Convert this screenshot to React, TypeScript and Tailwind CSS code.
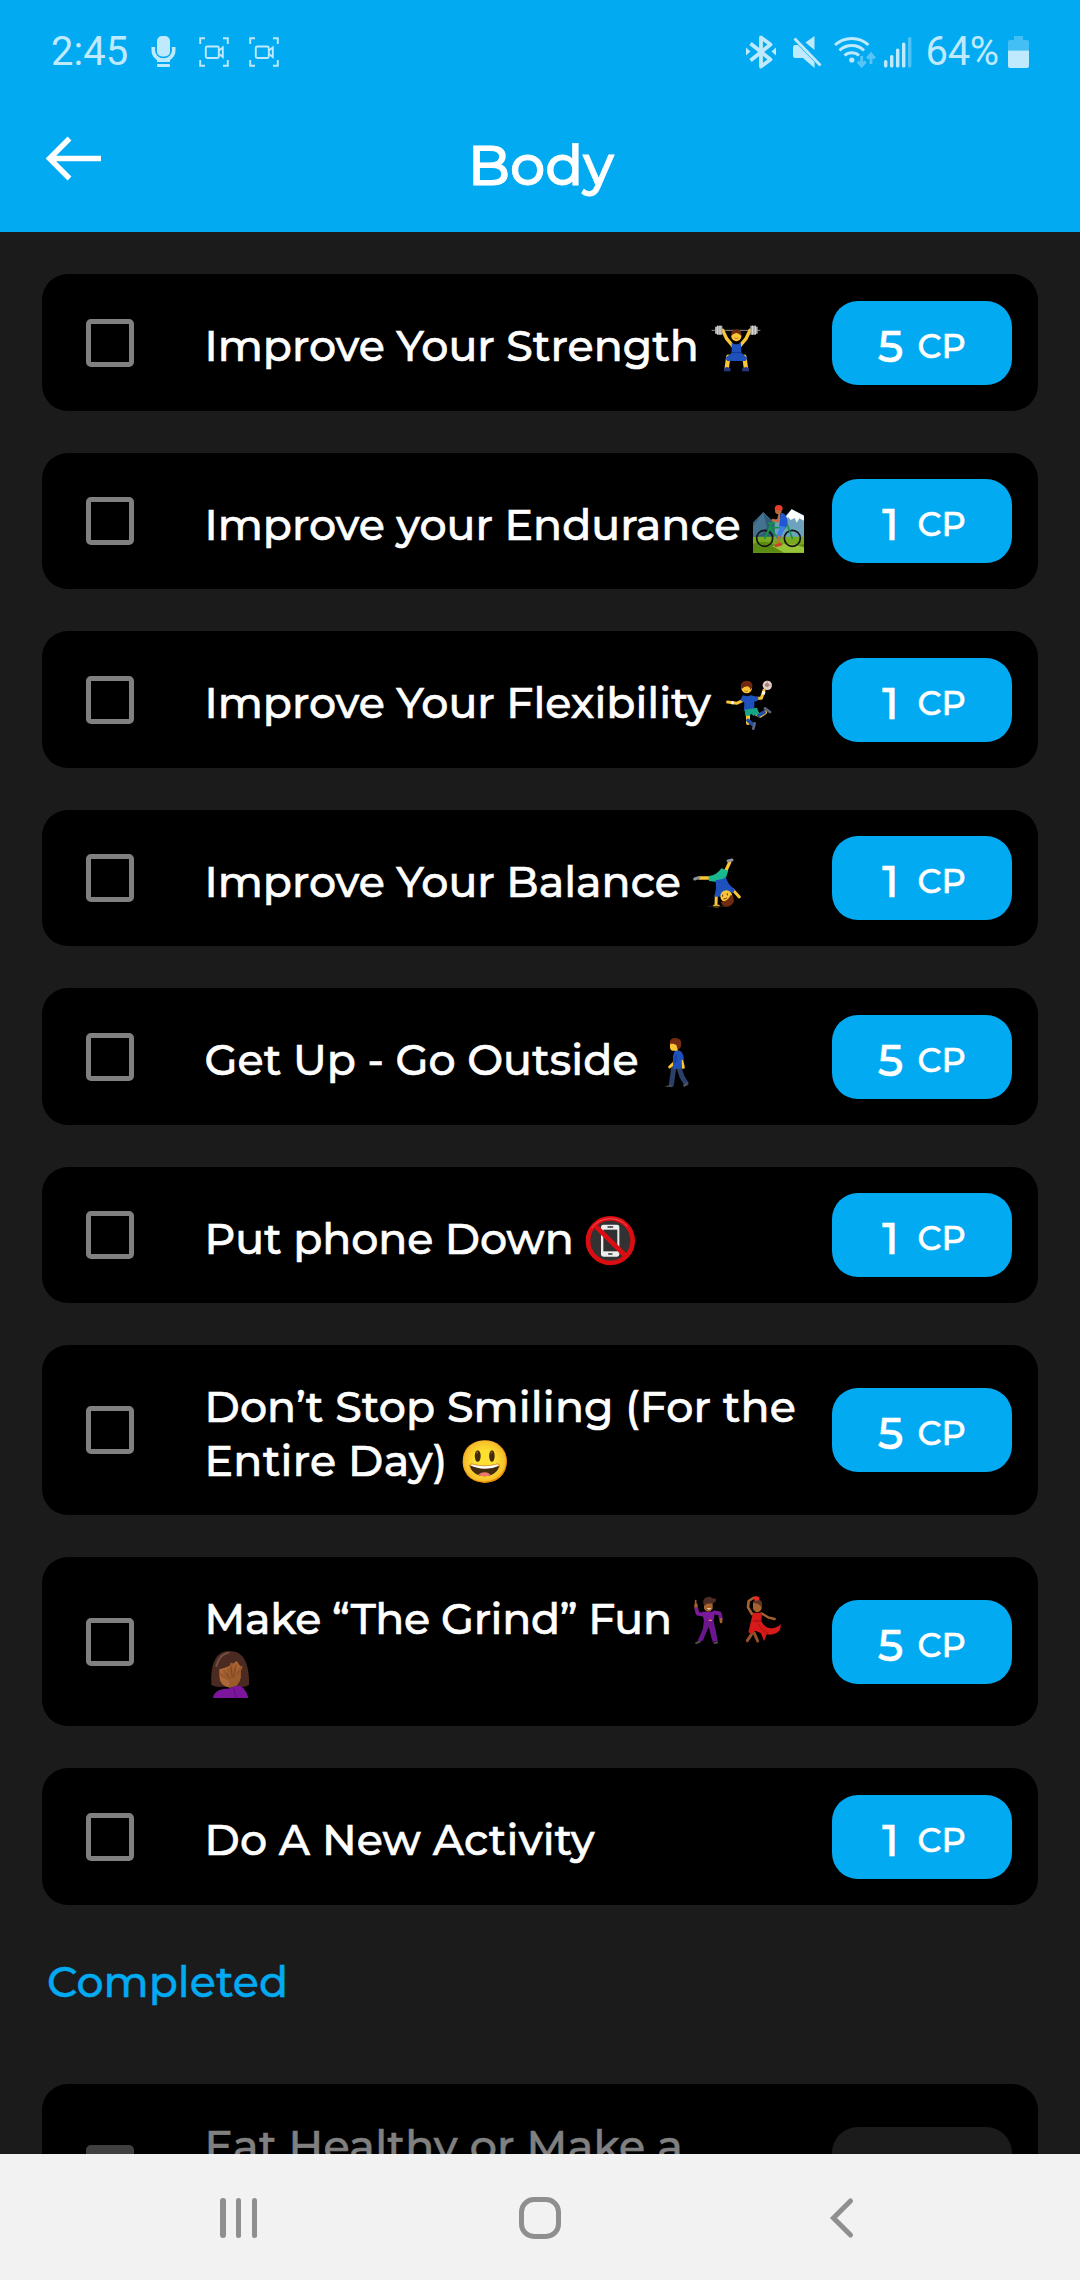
import React from "react";

type Picture = { art: React.ReactNode; gap: string };
type Line = { text?: string; tracking?: string; pictures?: Picture[] };
type Task = { lines: Line[]; points?: number };

function Art({ label, children }: { label: string; children: React.ReactNode }) {
  return (
    <svg
      className="mt-[3.5px] h-[52px] w-[52px] overflow-visible"
      viewBox="0 0 156 156"
      role="img"
      aria-label={label}
      fill="none"
      strokeLinecap="round"
      strokeLinejoin="round"
    >
      {children}
    </svg>
  );
}

const SKIN = "#fcc537";
const BLUE = "#1f51bd";

const lifter = (
  <Art label="Man lifting weights">
    <path d="M6 19H150" stroke="#8a8a8a" strokeWidth="3" />
    <path d="M38 19L50 44 70 68M120 19L108 44 88 68" stroke={SKIN} strokeWidth="10" />
    <path d="M55 98L50 134M103 98L108 134" stroke={SKIN} strokeWidth="13" />
    <path d="M15 8h7V5h15v27H22v-3h-7zM143 8h-7V5h-15v27h15v-3h7z" fill="#a9a9a9" />
    <path d="M22 5v27M30 5v27M136 5v27M128 5v27" stroke="#dedede" strokeWidth="3" strokeLinecap="butt" />
    <circle cx="79" cy="37" r="15" fill={SKIN} />
    <path d="M64 35q-2-19 15-19t15 19q-8-8-15-8t-15 8z" fill="#6b2c10" />
    <path d="M74 42q5 4 10 0" stroke="#a0571a" strokeWidth="2" />
    <path d="M65 56q14 10 28 0l1 30 18 16-5 9H52l-6-9 19-16z" fill={BLUE} />
    <path d="M66 86h27" stroke="#123a90" strokeWidth="3" />
    <path d="M42 142v-9l8-4 11 3 1 10zM117 142v-9l-8-4-12 3-1 10z" fill="#26387f" />
  </Art>
);

const cyclist = (
  <Art label="Mountain biker">
    <path d="M3 62L34 31l26 26 40-15 19-20 37 18v112H3z" fill="#6da3bd" />
    <path d="M3 62L34 31l34 32v44H3z" fill="#2f5c78" />
    <path d="M34 31l10 45-14 20L3 104V72z" fill="#43738f" />
    <path d="M102 44l17-22 37 20v14l-14-7-8 13-6-14-12 6-8-10-6 12z" fill="#ffffff" />
    <path d="M3 104h153v48H3z" fill="#79a91f" />
    <path d="M3 126q30-14 60 0t93 0v26H3z" fill="#5a8c12" />
    <path d="M60 132q50-14 96 4v16H96z" fill="#98c43a" />
    <circle cx="38" cy="109" r="24" stroke="#141414" strokeWidth="5" />
    <circle cx="121" cy="109" r="24" stroke="#141414" strokeWidth="5" />
    <path d="M38 109L58 66M38 109l17-32 22 31 28-42 16 43M55 77h46M50 64h18" stroke="#169447" strokeWidth="5" />
    <path d="M82 38L78 58 62 54" stroke="#c46c3a" strokeWidth="7" />
    <path d="M94 70L86 88 80 106" stroke="#3e7ce6" strokeWidth="14" />
    <path d="M82 104l-4 20" stroke="#c46c3a" strokeWidth="8" />
    <path d="M72 131l14-4" stroke="#ce412a" strokeWidth="9" />
    <path d="M86 32q19 1 21 28l-4 14-22-2 3-18z" fill="#2257d4" />
    <path d="M93 40L88 57" stroke="#2257d4" strokeWidth="10" />
    <circle cx="79" cy="26" r="10" fill="#b9683b" />
    <path d="M68 21q0-12 12-12t12 12l-3 5-21-3z" fill="#e83c2c" />
  </Art>
);

const handball = (
  <Art label="Man playing handball">
    <path d="M57 58L38 67 11 63M97 52L112 52 120 28" stroke={SKIN} strokeWidth="9" />
    <path d="M22 65h7M118 40l2-9" stroke="#ffffff" strokeWidth="9" strokeLinecap="butt" />
    <path d="M72 98v28M97 98l12 6 14-10" stroke={SKIN} strokeWidth="12" />
    <path d="M72 118l14 12M104 103l16-9" stroke="#244da5" strokeWidth="11" />
    <path d="M92 127l-4 16M123 82l15 11" stroke="#5c667b" strokeWidth="8" />
    <path d="M56 43q14 5 25 0l23 6-4 11-9 2 0 25-31 2 1-24-12-7z" fill={BLUE} />
    <path d="M62 86l37-6 7 18-18 6-7-6-3 6H64z" fill="#16a584" />
    <circle cx="68" cy="21" r="16" fill={SKIN} />
    <path d="M51 19q-2-20 17-20t17 20l-5 7q-4-10-10-10-10 0-17 8z" fill="#70290e" />
    <path d="M62 30q5 4 9 0" stroke="#98501b" strokeWidth="2" />
    <circle cx="130" cy="13" r="14" fill="#e5cfc7" />
    <path d="M124 9l7-3 5 6-5 6-7-3zM130 0v5M142 13h-5" fill="#a4857a" stroke="#a4857a" strokeWidth="2" />
  </Art>
);

const cartwheel = (
  <Art label="Man cartwheeling">
    <path d="M52 57H22M102 34L113 10" stroke={SKIN} strokeWidth="10" />
    <path d="M8 60l12-4M108 6l12-3" stroke="#8d929c" strokeWidth="9" />
    <path d="M50 51q24-1 38-23l21 7-8 23-20 12-30-4z" fill="#18b891" />
    <path d="M73 108L72 138M122 92l20 22" stroke={SKIN} strokeWidth="9" />
    <path d="M66 141h14" stroke={SKIN} strokeWidth="7" />
    <path d="M50 142h48" stroke="#26200f" strokeWidth="3" />
    <path d="M71 63q18 2 31-9 3 21 27 37l-6 12-19-8-22 18H67l5-24z" fill={BLUE} />
    <circle cx="103" cy="112" r="18" fill={SKIN} />
    <path d="M86 128q19 2 31-21 11 8 8 22-8 15-23 14-12-2-16-15z" fill="#6f2a0f" />
    <path d="M92 108v4M106 104v4M96 120q5 0 8-3" stroke="#5b3310" strokeWidth="3" />
  </Art>
);

const walker = (
  <Art label="Man walking">
    <path d="M72 86L64 140M86 86l10 30 12 20" stroke="#2c3f68" strokeWidth="15" />
    <path d="M46 145l16-5 5 6H45zM98 142l14-11 2 6-10 10z" fill="#50545f" />
    <path d="M94 62l6 26M78 60l-5 14-14 13" stroke={SKIN} strokeWidth="9" />
    <path d="M75 37q20-3 25 16l2 11-7 3 1 24-27 2V54z" fill={BLUE} />
    <path d="M78 54l-2 18" stroke="#173f9f" strokeWidth="6" />
    <path d="M60 20q2-17 17-16 14 2 14 14l-9 20H68q-10-2-8-18z" fill={SKIN} />
    <path d="M59 17q-1-17 17-17 19 1 18 18 0 13-11 17l-4-14-9-4z" fill="#742c10" />
  </Art>
);

const noPhone = (
  <Art label="No mobile phones">
    <circle cx="76" cy="74" r="66" fill="#323232" />
    <rect x="48" y="26" width="55" height="96" rx="7" fill="#eeeeee" />
    <rect x="55" y="41" width="42" height="65" fill="#303030" />
    <path d="M69 33h14M71 114h10" stroke="#303030" strokeWidth="4" />
    <circle cx="76" cy="74" r="67" stroke="#dc0d12" strokeWidth="14" />
    <path d="M30 29l92 91" stroke="#dc0d12" strokeWidth="14" />
    <path d="M21 35q20-27 55-27 30 0 50 22" stroke="#f0565a" strokeWidth="3" />
  </Art>
);

const discoDancer = (
  <Art label="Man dancing">
    <path d="M41 32V14" stroke="#a5622f" strokeWidth="5" />
    <path d="M42 27v8" stroke="#a5622f" strokeWidth="10" />
    <path d="M43 39l4 14 20 4M96 49l17 3 4 17" stroke="#7a1a9b" strokeWidth="11" />
    <path d="M117 70v8" stroke="#a5622f" strokeWidth="8" />
    <path d="M60 47h39l-5 28H66z" fill="#7a1a9b" />
    <path d="M66 73h28l7 30 6 32-15 3-12-46-18 43-15-1 15-33z" fill="#6c168d" />
    <path d="M82 73h6" stroke="#d8a437" strokeWidth="4" />
    <path d="M43 141l10-4M98 141l7-2" stroke="#4c4a49" strokeWidth="7" />
    <path d="M66 22h26v16q-5 9-13 9t-13-9z" fill="#a5622f" />
    <path d="M63 20q1-19 21-18 9 7 19 6-1 13-14 14-14-4-22 8z" fill="#4c2c24" />
    <path d="M77 38q4 3 8 0" stroke="#ffffff" strokeWidth="3" />
  </Art>
);

const dressDancer = (
  <Art label="Woman dancing">
    <path d="M48 54L36 34 38 15 52 6" stroke="#a5622f" strokeWidth="8" />
    <path d="M76 52l20 12 20 5" stroke="#a5622f" strokeWidth="7" />
    <path d="M50 98l-4 18-12 18M55 112l10 23" stroke="#8f5229" strokeWidth="9" />
    <path d="M51 19q14-10 26 3v16q-5 10-13 10t-13-10z" fill="#a5622f" />
    <path d="M50 20q9-16 22-8 10 7 5 22-8-13-27-14z" fill="#5d3524" />
    <path d="M50 4l9-4 11 4v8L58 15z" fill="#e82b25" />
    <path d="M51 50h27l-2 25q10 22 30 22 17-1 28-12 2 18-14 27-13 6-28 3l-8 21-9-24-16-8-12 9-10-4z" fill="#d71a19" />
    <path d="M52 75h24" stroke="#971012" strokeWidth="3" />
    <path d="M68 85q8 20 28 26" stroke="#ab1115" strokeWidth="3" />
  </Art>
);

const facepalm = (
  <Art label="Woman facepalming">
    <path d="M19 103Q14 3 74 3t58 100q-3 7-20 7H40q-17 0-21-7z" fill="#4b2b21" />
    <path d="M34 48Q44 12 70 8" stroke="#735044" strokeWidth="6" />
    <path d="M43 58q30-6 52-25l12 17v34q-8 29-33 29-29-5-31-33z" fill="#ac6838" />
    <path d="M58 64L76 91 70 57M76 91L80 43M80 86L94 44M86 86l22-34M86 96L48 74" stroke="#9b5a2c" strokeWidth="9" />
    <path d="M64 71l15 22M78 52l4 32M92 54l-7 29M103 64L90 89" stroke="#6e3b1b" strokeWidth="2" />
    <path d="M74 88q20-12 34-20-2 35-20 44H72z" fill="#9b5a2c" />
    <path d="M24 144q3-23 32-27 22 0 32-9l20 0q18 14 22 36z" fill="#7b169b" />
    <path d="M86 117l8 27" stroke="#59106f" strokeWidth="3" />
  </Art>
);

const smiley = <span className="text-[41.5px]">😃</span>;

const tasks: Task[] = [
  { lines: [{ text: "Improve Your Strength", pictures: [{ art: lifter, gap: "ml-[11px]" }] }], points: 5 },
  { lines: [{ text: "Improve your Endurance", pictures: [{ art: cyclist, gap: "ml-[11px]" }] }], points: 1 },
  { lines: [{ text: "Improve Your Flexibility", pictures: [{ art: handball, gap: "ml-[13px]" }] }], points: 1 },
  { lines: [{ text: "Improve Your Balance", pictures: [{ art: cartwheel, gap: "ml-[11px]" }] }], points: 1 },
  {
    lines: [{ text: "Get Up - Go Outside", tracking: "tracking-[0.06px]", pictures: [{ art: walker, gap: "ml-[11px]" }] }],
    points: 5,
  },
  { lines: [{ text: "Put phone Down", tracking: "tracking-[-0.06px]", pictures: [{ art: noPhone, gap: "ml-[11px]" }] }], points: 1 },
  {
    lines: [
      { text: "Don’t Stop Smiling (For the", tracking: "tracking-[0.12px]" },
      { text: "Entire Day)", tracking: "tracking-[0.25px]", pictures: [{ art: smiley, gap: "ml-[11px]" }] },
    ],
    points: 5,
  },
  {
    lines: [
      {
        text: "Make “The Grind” Fun",
        tracking: "tracking-[-0.33px]",
        pictures: [
          { art: discoDancer, gap: "ml-[10px]" },
          { art: dressDancer, gap: "ml-[2px]" },
        ],
      },
      { pictures: [{ art: facepalm, gap: "ml-0" }] },
    ],
    points: 5,
  },
  { lines: [{ text: "Do A New Activity", tracking: "tracking-[0.16px]" }], points: 1 },
];

function TaskCard({ task, done = false }: { task: Task; done?: boolean }) {
  return (
    <div
      className={`flex w-[996px] shrink-0 items-center rounded-[26px] bg-black pr-[26px] pl-[44px] ${
        task.lines.length > 1 ? "h-[169.5px]" : "h-[136.5px]"
      }`}
    >
      <div
        className={`size-[48px] shrink-0 rounded-[5px] border-[5px] ${
          done ? "border-[#404040] bg-[#404040]" : "border-[#808080]"
        }`}
      />
      <div className={`ml-[70.5px] flex-1 pt-[9px] ${done ? "text-[#808080]" : "text-white"}`}>
        {task.lines.map((line, i) => (
          <div key={i} className="flex h-[53.5px] text-[42.7px] leading-[53.5px] font-medium whitespace-nowrap">
            {line.text && (
              <span className={`[-webkit-text-stroke:0.6px_currentColor] ${line.tracking ?? ""}`}>{line.text}</span>
            )}
            {line.pictures?.map((p, j) => (
              <span key={j} className={`${p.gap} flex w-[52px] shrink-0 justify-center`}>
                {p.art}
              </span>
            ))}
          </div>
        ))}
      </div>
      <div
        className={`flex h-[84px] w-[180px] shrink-0 rounded-[26px] font-medium [-webkit-text-stroke:0.6px_currentColor] ${
          done ? "bg-[#1b1b1b]" : "bg-[#02aaf2] text-white"
        }`}
      >
        {task.points !== undefined && (
          <>
            <span className="ml-[40.5px] w-[36px] text-center text-[44.5px] leading-[91px]">{task.points}</span>
            <span className="ml-[9px] text-[33.5px] leading-[90px]">CP</span>
          </>
        )}
      </div>
    </div>
  );
}

function RecordIcon() {
  return (
    <svg className="h-[30px] w-[30px]" viewBox="0 0 30 30" fill="none" stroke="currentColor" strokeWidth="1.9">
      <path d="M1.200 7V1.200H6M24 1.200h4.800V7M28.800 23v5.800H24M6 28.800H1.200V23" />
      <rect x="6.800" y="9.500" width="13" height="11.500" rx="1.500" />
      <path d="M20 13.500l3.800-3v9.500l-3.800-3" />
    </svg>
  );
}

function StatusBar() {
  return (
    <div className="flex h-[104px] items-center pl-[51px] font-['Roboto'] text-[#bfe9fc]">
      <span className="w-[77px] text-[40px] leading-[104px] whitespace-nowrap">2:45</span>
      <svg className="ml-[23px] h-[32px] w-[25px]" viewBox="0 0 25 32" fill="currentColor">
        <rect x="6" y="0" width="13" height="20.500" rx="5" />
        <path d="M2.300 11v3.500a10.200 9.500 0 0 0 20.400 0V11" fill="none" stroke="currentColor" strokeWidth="3.600" />
        <rect x="6" y="24" width="13" height="2" />
        <rect x="6" y="28" width="13" height="3" rx="1" />
      </svg>
      <span className="ml-[23px] flex gap-[20px]">
        <RecordIcon />
        <RecordIcon />
      </span>
      <svg className="ml-[466.5px] h-[34px] w-[30px]" viewBox="0 0 30 34" fill="none" stroke="currentColor" strokeWidth="3.800" strokeLinejoin="round">
        <path d="M4.500 8.500l20 16L15 31.500V2.500l9.500 7-20 16" />
        <path d="M0 12.500v8l4.500-4zM30 12.500v8l-4.500-4z" fill="currentColor" stroke="none" />
      </svg>
      <svg className="ml-[17.5px] h-[32px] w-[29px]" viewBox="0 0 29 32" fill="currentColor">
        <path d="M0 12q0-3 2-3h3L21.500 26v6L10 22H2q-2 0-2-3zM12.500 6.500L21.500 0v14z" />
        <path d="M1.500 2.500l26 27" stroke="currentColor" strokeWidth="2.900" />
      </svg>
      <svg className="ml-[11.5px] h-[34px] w-[42px]" viewBox="0 0 42 34" fill="none" stroke="currentColor" strokeWidth="3">
        <path d="M1 10a24.500 24.500 0 0 1 33.500 0M5.500 15.500a17.500 17.500 0 0 1 24.500 0M10.500 20.500a10.800 10.800 0 0 1 14.500 0" />
        <circle cx="17.800" cy="25" r="2.600" fill="currentColor" stroke="none" />
        <path d="M27.700 21v9M23.800 26.500l3.900 4.500 3.900-4.500M37 29v-9M33.200 23.500l3.800-4.500 3.800 4.500" strokeWidth="2.800" opacity="0.450" />
      </svg>
      <svg className="ml-[8px] h-[31px] w-[28px]" viewBox="0 0 28 31" fill="currentColor">
        <rect x="0" y="23" width="3.400" height="7.500" rx="1.500" />
        <rect x="6" y="18" width="3.400" height="12.500" rx="1.500" />
        <rect x="12" y="11.500" width="3.400" height="19" rx="1.500" />
        <rect x="18" y="5.500" width="3.400" height="25" rx="1.500" />
        <rect x="24" y="0" width="3.400" height="30.500" rx="1.500" opacity="0.400" />
      </svg>
      <span className="ml-[14px] w-[72px] text-[40px] leading-[104px] tracking-[-0.3px] whitespace-nowrap">64%</span>
      <svg className="ml-[10px] h-[32px] w-[21px]" viewBox="0 0 21 32" fill="currentColor">
        <path d="M6 0h9v4h4q2 0 2 2v8.500H0V6q0-2 2-2h4z" opacity="0.350" />
        <path d="M0 14.500h21V30q0 2-2 2H2q-2 0-2-2z" />
      </svg>
    </div>
  );
}

export default function App() {
  return (
    <div className="flex h-[2280px] w-[1080px] flex-col overflow-hidden bg-[#1b1b1b] font-['Montserrat','Inter',sans-serif]">
      <header className="h-[232.4px] shrink-0 bg-[#02aaf2]">
        <StatusBar />
        <div className="grid h-[128px] grid-cols-[200px_1fr_200px]">
          <svg className="mt-[32px] ml-[45px] h-[45px] w-[56px]" viewBox="0 0 56 45" fill="none" stroke="white" strokeWidth="5.400">
            <path d="M56 22.500H5M24.500 2.500L4.500 22.500l20 20" />
          </svg>
          <h1 className="pt-[26px] pl-[2px] text-center text-[55.5px] leading-[70px] font-medium text-white [-webkit-text-stroke:0.9px_currentColor]">
            Body
          </h1>
        </div>
      </header>
      <main className="flex min-h-0 flex-1 flex-col items-center overflow-hidden pt-[42px]">
        <div className="flex shrink-0 flex-col gap-[42px]">
          {tasks.map((t, i) => (
            <TaskCard key={i} task={t} />
          ))}
        </div>
        <h2 className="mt-[51px] h-[128px] w-[996px] shrink-0 pl-[5px] text-[42.7px] leading-[53.5px] font-medium text-[#02aaf2] [-webkit-text-stroke:0.4px_currentColor]">
          Completed
        </h2>
        <TaskCard task={{ lines: [{ text: "Eat Healthy or Make a", tracking: "tracking-[0.28px]" }, {}] }} done />
      </main>
      <nav className="flex h-[126px] shrink-0 items-center bg-[#f2f2f2] pt-[2px] text-[#8f8f8f]">
        <div className="ml-[220px] flex h-[40px] w-[37px] justify-between">
          <i className="w-[5.5px] rounded-full bg-current" />
          <i className="w-[5.5px] rounded-full bg-current" />
          <i className="w-[5.5px] rounded-full bg-current" />
        </div>
        <div className="ml-[262px] h-[42px] w-[42px] rounded-[15px] border-[5px] border-current" />
        <svg className="ml-[268px] h-[42px] w-[26px]" viewBox="0 0 26 42" fill="none" stroke="currentColor" strokeWidth="5" strokeLinecap="round">
          <path d="M21.500 4L4.500 21l17 17" strokeLinejoin="miter" />
        </svg>
      </nav>
    </div>
  );
}
